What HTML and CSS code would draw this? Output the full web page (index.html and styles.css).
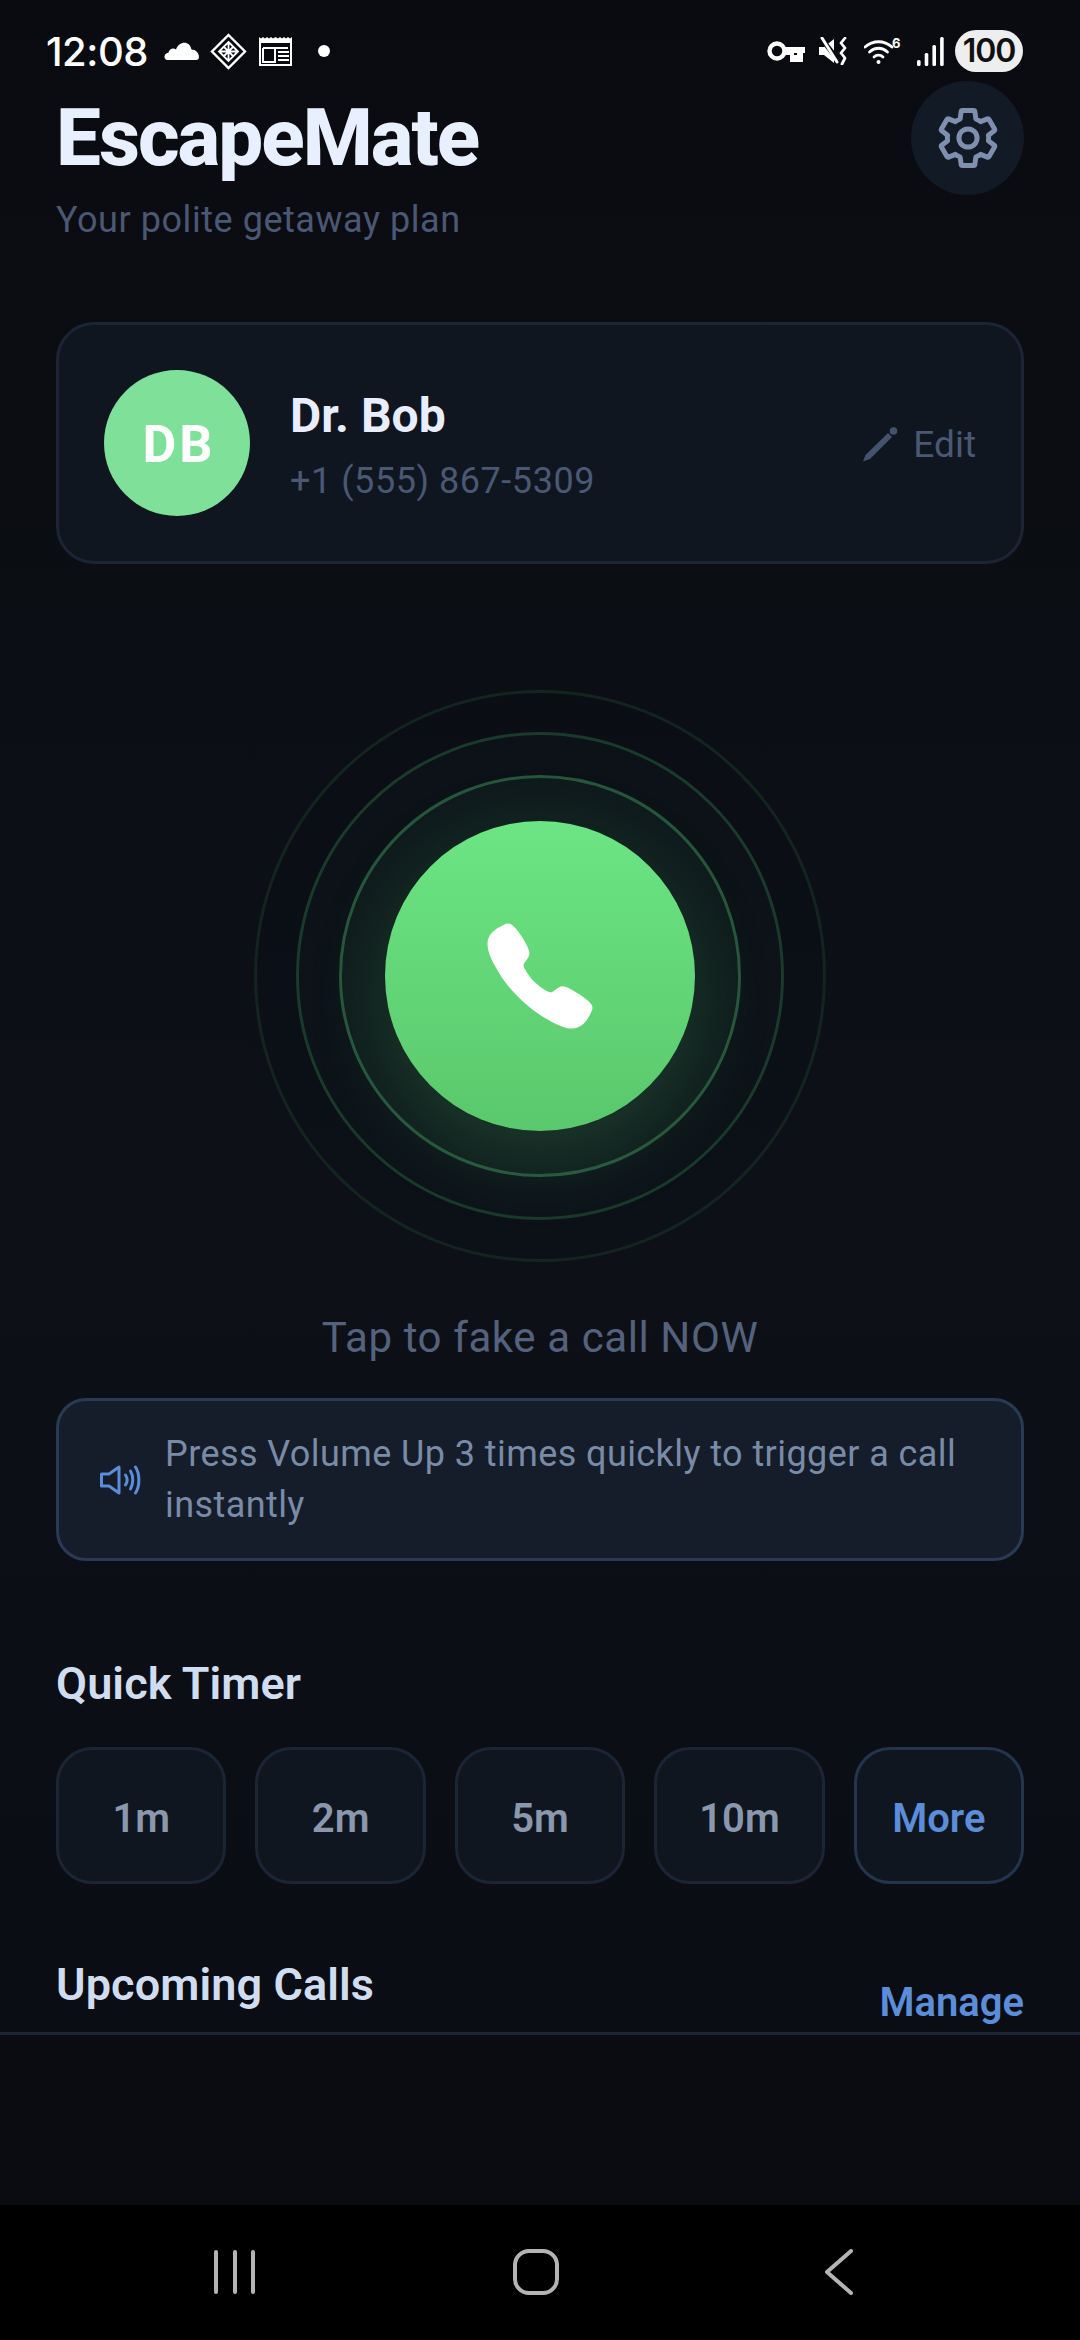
FILE: index.html
```html
<!DOCTYPE html>
<html lang="en">
<head>
<meta charset="utf-8">
<title>EscapeMate</title>
<link rel="stylesheet" href="styles.css">
</head>
<body>
<div class="screen">
  <div class="app">
    <div class="status">
      <span class="time">12:08</span>
      <svg class="si-cloud" viewBox="0 0 35 20"><path d="M3.5 20C-.5 20-1 13.5 4.500 12.500C5.500 8.500 9.500 7.500 12 9.500C14.500 1.500 25.500-.5 27.500 9.500C31.500 9.500 35 13 35 17C35 19 34 20 32 20Z" fill="#fff"/></svg>
      <svg class="si-diamond" viewBox="0 0 37 37" fill="none" stroke="#fff" stroke-width="2.400"><path d="M18.500 2 35 18.500 18.500 35 2 18.500Z"/><path stroke-width="1.800" d="M18.500 9 28 18.500 18.500 28 9 18.500ZM18.500 9V28M9 18.500H28M13.500 13.500 23.500 23.500M23.500 13.500 13.500 23.500"/></svg>
      <svg class="si-cal" viewBox="0 0 33 29" fill="none" stroke="#fff"><path fill="#fff" stroke="none" d="M0 0 2 1.500 4 0 6 1.500 8 0 10 1.500 12 0 14 1.500 16.500 0 19 1.500 21 0 23 1.500 25 0 27 1.500 29 0 31 1.500 33 0V6H0Z"/><path stroke-width="2" d="M1 5V28H32V5"/><path stroke-width="2" d="M4 11H29M4 11V25H16V11"/><path stroke-width="1.800" d="M19 15H30M19 19H30M19 23H30"/></svg>
      <span class="si-dot"></span>
      <span class="status-gap"></span>
      <svg class="si-key" viewBox="0 0 38 21" fill="none"><circle cx="10" cy="10" r="7.500" stroke="#fff" stroke-width="4.400"/><circle cx="10" cy="10" r="2" fill="#0a0b10"/><path d="M17 6H38V12H36V21H23V14H17Z" fill="#fff"/><path d="M30 12H27V14H30Z" fill="#0a0b10"/></svg>
      <svg class="si-mute" viewBox="0 0 29 28" fill="none"><path d="M0 10H5L15 2V26L5 18H0Z" fill="#fff"/><path d="M1 0 20 24" stroke="#0a0b10" stroke-width="5"/><path d="M3 1 18 25" stroke="#fff" stroke-width="3" stroke-linecap="round"/><path d="M26 1 22 6 26 11 22 16 26 21 23 27" stroke="#fff" stroke-width="2.800" stroke-linecap="round" stroke-linejoin="round"/></svg>
      <svg class="si-wifi" viewBox="0 -4 38 31" fill="none" stroke="#fff" stroke-width="2.800" stroke-linecap="round"><path d="M1 10C9 3 20 3 28 10"/><path d="M5.500 15C11 10 18 10 23.500 15"/><path d="M10 20C12.500 17.500 16.500 17.500 19 20"/><circle cx="14.500" cy="25" r="2" fill="#fff" stroke="none"/><text class="wifi-six" x="28" y="11">6</text></svg>
      <svg class="si-signal" viewBox="0 0 27 29" fill="#fff"><rect x="0" y="23" width="3.600" height="6" rx="1.500"/><rect x="7.700" y="16" width="3.600" height="13" rx="1.500"/><rect x="15.400" y="8" width="3.600" height="21" rx="1.500"/><rect x="23.100" y="0" width="3.600" height="29" rx="1.500"/></svg>
      <span class="battery">100</span>
    </div>

    <header class="header">
      <div class="brand">
        <h1 class="title">EscapeMate</h1>
        <p class="subtitle">Your polite getaway plan</p>
      </div>
      <button class="gear-btn">
        <svg class="gear" viewBox="0 0 24 24" fill="none" stroke="#7f8fae" stroke-width="1.800" stroke-linejoin="round"><path d="M19.430 12.980c.04-.32.07-.64.07-.98 0-.34-.03-.66-.07-.98l2.110-1.650c.19-.15.24-.42.12-.64l-2-3.460c-.09-.16-.26-.25-.44-.25-.06 0-.12.01-.17.03l-2.490 1c-.52-.4-1.080-.73-1.690-.98l-.38-2.650C14.460 2.180 14.250 2 14 2h-4c-.25 0-.46.18-.49.42l-.38 2.650c-.61.25-1.170.59-1.690.98l-2.490-1c-.06-.02-.12-.03-.18-.03-.17 0-.34.09-.43.25l-2 3.460c-.13.22-.07.49.12.64l2.110 1.650c-.04.32-.07.65-.07.98 0 .33.03.66.07.98l-2.110 1.650c-.19.15-.24.42-.12.64l2 3.460c.09.16.26.25.44.25.06 0 .12-.01.17-.03l2.490-1c.52.4 1.080.73 1.690.98l.38 2.650c.03.24.24.42.49.42h4c.25 0 .46-.18.49-.42l.38-2.650c.61-.25 1.170-.59 1.690-.98l2.490 1c.06.02.12.03.18.03.17 0 .34-.09.43-.25l2-3.460c.12-.22.07-.49-.12-.64l-2.110-1.650z"/><circle cx="12" cy="12" r="3.300"/></svg>
      </button>
    </header>

    <section class="contact">
      <div class="avatar">DB</div>
      <div class="contact-info">
        <div class="contact-name">Dr. Bob</div>
        <div class="contact-phone">+1 (555) 867-5309</div>
      </div>
      <div class="edit">
        <svg class="pencil" viewBox="0 0 36 36" fill="#44526e"><path d="M1 35.500 3.500 29 26 7 30 11 8 33Z"/><circle cx="31.500" cy="5" r="3.800"/></svg>
        <span>Edit</span>
      </div>
    </section>

    <section class="call-zone">
      <div class="ring ring-3">
        <div class="ring ring-2">
          <div class="ring ring-1">
            <button class="call-btn">
              <svg class="phone" viewBox="0 0 512 512"><path fill="#fff" d="M391 480c-19.520 0-46.940-7.060-88-30-49.930-28-88.550-53.850-138.210-103.380C116.910 298.770 93.610 267.790 61 208.450c-36.840-67-30.560-102.120-23.540-117.130C45.820 73.380 58.160 62.650 74.110 52a176.300 176.300 0 0128.640-15.200c1-.43 1.930-.84 2.760-1.210 4.950-2.230 12.450-5.600 21.950-2 6.340 2.380 12 7.250 20.860 16 18.170 17.920 43 57.830 52.160 77.430 6.150 13.210 10.220 21.930 10.230 31.710 0 11.450-5.760 20.280-12.750 29.810-1.310 1.790-2.610 3.500-3.870 5.160-7.610 10-9.280 12.890-8.180 18.050 2.230 10.370 18.860 41.240 46.190 68.510s57.310 42.850 67.720 45.070c5.380 1.150 8.330-.59 18.650-8.470 1.480-1.130 3-2.300 4.590-3.470 10.660-7.930 19.080-13.540 30.260-13.540h.06c9.730 0 18.060 4.220 31.860 11.180 18 9.080 59.110 33.590 77.140 51.780 8.770 8.840 13.660 14.480 16.050 20.810 3.600 9.530.21 17-2 22-.37.83-.78 1.740-1.210 2.750a176.490 176.490 0 01-15.290 28.580c-10.630 15.900-21.400 28.210-39.380 36.580A67.420 67.420 0 01391 480z"/></svg>
            </button>
          </div>
        </div>
      </div>
      <p class="tap-label">Tap to fake a call NOW</p>
    </section>

    <section class="hint">
      <svg class="speaker" viewBox="0 0 41 30" fill="none" stroke="#5b8dd9" stroke-width="3" stroke-linejoin="round" stroke-linecap="round"><path d="M1.500 9H9L19 2V28L9 21H1.500Z"/><path d="M25.500 10C27.500 13 27.500 17 25.500 20"/><path d="M30.500 6C33.500 11 33.500 19 30.500 24"/><path d="M35.500 2C40 9 40 21 35.500 28"/></svg>
      <p class="hint-text">Press Volume Up 3 times quickly to trigger a call instantly</p>
    </section>

    <section class="quick">
      <h2 class="section-title">Quick Timer</h2>
      <div class="timers">
        <button class="timer">1m</button>
        <button class="timer">2m</button>
        <button class="timer">5m</button>
        <button class="timer">10m</button>
        <button class="timer timer-more">More</button>
      </div>
    </section>

    <section class="upcoming">
      <h2 class="section-title">Upcoming Calls</h2>
      <a class="manage">Manage</a>
    </section>
  </div>

  <div class="tabbar"></div>

  <nav class="navbar">
    <svg class="nav-recent" viewBox="0 0 44 44" stroke="#b4b4b4" stroke-width="4" stroke-linecap="round"><path d="M3 2V42M22 2V42M40 2V42"/></svg>
    <span class="nav-home"></span>
    <svg class="nav-back" viewBox="0 0 28 46" fill="none" stroke="#b4b4b4" stroke-width="4" stroke-linecap="round" stroke-linejoin="round"><path d="M26 2 2 23 26 44" /></svg>
  </nav>
</div>
</body>
</html>
```

FILE: styles.css
```css
* { box-sizing: border-box; }
html, body { margin: 0; padding: 0; background: #0a0b10; }
body { font-family: Roboto, "Noto Sans", sans-serif; }
h1, h2, p { margin: 0; }
button { font-family: inherit; padding: 0; cursor: pointer; }

.screen {
  width: 1080px;
  height: 2340px;
  display: flex;
  flex-direction: column;
  overflow: hidden;
}
.app {
  height: 2032px;
  flex: none;
  background: linear-gradient(180deg, #0a0b10 0%, #0d1117 60%, #0a0d13 100%);
}

/* status bar */
.status {
  height: 81px;
  padding: 21px 57px 0 46px;
  display: flex;
  align-items: center;
}
.time { font: 500 40px Inter, Roboto, sans-serif; color: #fff; width: 118px; letter-spacing: -.5px; }
.si-cloud { width: 35px; height: 20px; margin-top: -2px; }
.si-diamond { width: 37px; height: 37px; margin-left: 11px; }
.si-cal { width: 33px; height: 29px; margin-left: 12px; }
.si-dot { width: 12px; height: 12px; border-radius: 50%; background: #fff; margin-left: 26px; }
.status-gap { flex: 1; }
.si-key { width: 38px; height: 21px; }
.si-mute { width: 29px; height: 28px; margin-left: 14px; }
.si-wifi { width: 38px; height: 31px; margin-left: 16px; margin-top: -5px; }
.wifi-six { font: 700 13px Inter, sans-serif; fill: #fff; stroke: none; }
.si-signal { width: 27px; height: 29px; margin-left: 15px; }
.battery {
  width: 68px;
  height: 42px;
  margin-left: 11px;
  border-radius: 21px;
  background: #eeeeee;
  color: #111;
  font: 600 32px/42px Inter, Roboto, sans-serif;
  letter-spacing: -1px;
  text-align: center;
}

/* header */
.header {
  display: flex;
  justify-content: space-between;
  align-items: flex-start;
  padding: 0 56px;
}
.brand { padding-top: 12px; }
.title { font-size: 80px; line-height: 90px; font-weight: 800; color: #e8f0ff; letter-spacing: -2px; }
.subtitle { font-size: 36px; line-height: 42px; color: #4a5874; margin-top: 16px; letter-spacing: .55px; }
.gear-btn {
  width: 113px;
  height: 114px;
  border-radius: 50%;
  border: 0;
  background: #121a26;
  display: flex;
  align-items: center;
  justify-content: center;
}
.gear { width: 66px; height: 66px; }

/* contact card */
.contact {
  margin: 81px 56px 0;
  height: 242px;
  padding: 0 45px;
  border: 3px solid #1c2536;
  border-radius: 38px;
  background: #0f1620;
  display: flex;
  align-items: center;
}
.avatar {
  width: 146px;
  height: 146px;
  padding: 3px 0 0 4px;
  border-radius: 50%;
  background: #7fe09a;
  color: #fff;
  font-size: 52px;
  font-weight: 700;
  letter-spacing: 3px;
  display: flex;
  align-items: center;
  justify-content: center;
}
.contact-info { margin-left: 40px; padding-top: 4px; flex: 1; }
.contact-name { font-size: 48px; line-height: 56px; font-weight: 700; color: #e8eeff; }
.contact-phone { font-size: 36px; line-height: 42px; color: #4a5874; margin-top: 16px; letter-spacing: .55px; }
.edit { display: flex; align-items: center; gap: 15px; color: #4a5874; font-size: 37px; padding-top: 2px; }
.pencil { width: 36px; height: 36px; }

/* call */
.call-zone { display: flex; flex-direction: column; align-items: center; margin-top: 126px; }
.ring { border-radius: 50%; display: flex; align-items: center; justify-content: center; border-style: solid; border-width: 3px; }
.ring-3 { width: 572px; height: 572px; border-color: #14241f; background: rgba(90, 220, 130, .005); }
.ring-2 { width: 488px; height: 488px; border-color: #1a3a2c; background: rgba(90, 220, 130, .02); }
.ring-1 { width: 402px; height: 402px; border-color: #26553c; background: rgba(90, 220, 130, .045); }
.call-btn {
  width: 310px;
  height: 310px;
  border: 0;
  border-radius: 50%;
  background: linear-gradient(180deg, #6ce584 0%, #5ac86c 100%);
  box-shadow: 0 22px 80px rgba(90, 220, 130, .18);
  display: flex;
  align-items: center;
  justify-content: center;
}
.phone { width: 120px; height: 120px; }
.tap-label { font-size: 42px; line-height: 48px; color: #55627e; margin-top: 52px; letter-spacing: .6px; }

/* hint */
.hint {
  margin: 36px 56px 0;
  height: 163px;
  padding: 0 41px;
  border: 3px solid #2a3a55;
  border-radius: 30px;
  background: #151d2a;
  display: flex;
  align-items: center;
  gap: 24px;
}
.speaker { width: 41px; height: 30px; flex: none; }
.hint-text { font-size: 36px; line-height: 51px; color: #7a8ba8; letter-spacing: .42px; }

/* quick timer */
.quick { padding: 0 56px; margin-top: 97px; }
.section-title { font-size: 45px; line-height: 52px; font-weight: 600; color: #d0dcf0; letter-spacing: .1px; }
.timers { display: flex; gap: 29px; margin-top: 37px; }
.timer {
  flex: 1;
  height: 137px;
  padding-top: 6px;
  border: 3px solid #1c2536;
  border-radius: 36px;
  background: #0f1620;
  color: #8a97ad;
  font-size: 40px;
  font-weight: 600;
}
.timer-more { color: #5b8dd9; border-color: #24344f; }

/* upcoming */
.upcoming {
  padding: 0 56px;
  margin-top: 75px;
  display: flex;
  justify-content: space-between;
  align-items: flex-start;
}
.manage { font-size: 40px; line-height: 46px; font-weight: 600; color: #5b8dd9; margin-top: 21px; }

/* bottom */
.tabbar { height: 173px; flex: none; background: #0b0c11; border-top: 3px solid #1c2536; }
.navbar {
  height: 135px;
  flex: none;
  background: #000;
  position: relative;
}
.nav-recent { position: absolute; left: 213px; top: 45px; width: 44px; height: 44px; }
.nav-home { position: absolute; left: 513px; top: 44px; width: 46px; height: 46px; border: 4px solid #b4b4b4; border-radius: 16px; }
.nav-back { position: absolute; left: 825px; top: 44px; width: 28px; height: 46px; }
```
